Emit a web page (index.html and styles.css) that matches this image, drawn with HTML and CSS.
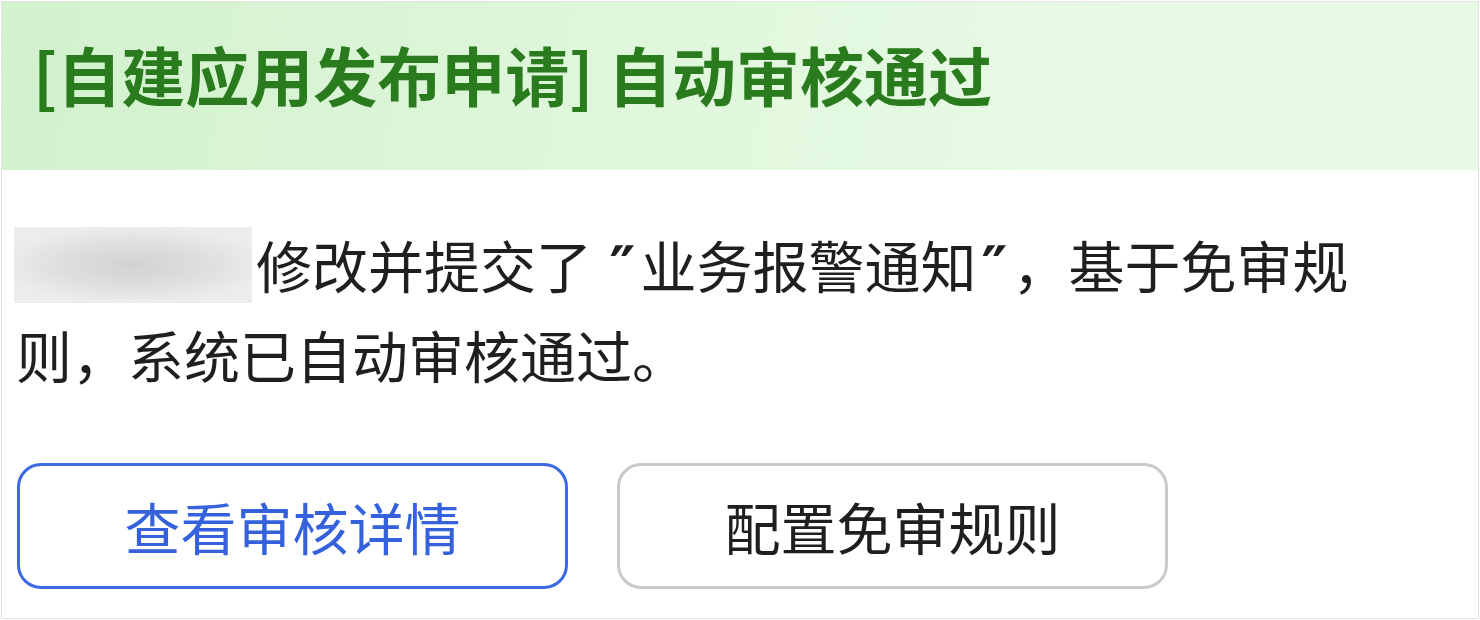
FILE: index.html
```html
<!DOCTYPE html>
<html lang="zh-CN">
<head>
<meta charset="utf-8">
<title>自动审核通过</title>
<link rel="stylesheet" href="styles.css">
</head>
<body>
<div class="card">
  <div class="card-header">
    <div class="card-title">[自建应用发布申请] 自动审核通过</div>
  </div>
  <div class="card-body">
    <p class="message"><span class="blurred-name"></span>修改并提交了 <span class="quote">″</span>业务报警通知<span class="quote">″</span>，基于免审规则，系统已自动审核通过。</p>
    <div class="actions">
      <button class="btn btn-primary">查看审核详情</button>
      <button class="btn btn-default">配置免审规则</button>
    </div>
  </div>
</div>
</body>
</html>
```
FILE: styles.css
```css
html, body {
  margin: 0;
  padding: 0;
  background: #ffffff;
}
body {
  font-family: "Noto Sans CJK SC", "Noto Sans", sans-serif;
}
.card {
  box-sizing: border-box;
  width: 1478px;
  height: 618px;
  margin: 1px 0 0 1px;
  border: 1px solid #e2e2e2;
  background: #ffffff;
  overflow: hidden;
}
.card-header {
  height: 168px;
  box-sizing: border-box;
  padding: 31px 0 0 31px;
  background: linear-gradient(100deg, #d2f1cd 0%, #e0f7dc 45%, #e8fae6 75%, #e8fae6 100%);
}
.card-title {
  font-size: 64px;
  line-height: 80px;
  font-weight: 700;
  color: #2a7a1e;
  white-space: nowrap;
}
.card-body {
  padding: 49px 0 0 14px;
}
.message {
  margin: 0;
  width: 1360px;
  font-size: 56px;
  line-height: 90px;
  color: #1f1f22;
}
.quote {
  font-family: "DejaVu Sans", sans-serif;
  font-size: 58px;
  font-weight: 700;
  line-height: 0;
  padding: 0 5px;
}
.blurred-name {
  display: inline-block;
  vertical-align: top;
  width: 238px;
  height: 76px;
  margin: 8px 4px 0 -2px;
  background: radial-gradient(ellipse 55% 50% at 50% 50%, #d2d2d2 0%, #dedede 55%, #ececec 100%);
  filter: blur(0.5px);
}
.actions {
  display: flex;
  gap: 49px;
  margin-top: 64px;
  padding-left: 1px;
}
.btn {
  box-sizing: border-box;
  width: 551px;
  height: 126px;
  border-radius: 24px;
  background: #ffffff;
  font-family: "Noto Sans CJK SC", "Noto Sans", sans-serif;
  font-size: 56px;
  line-height: 1;
  padding: 0;
  cursor: pointer;
}
.btn-primary {
  border: 3px solid #3d69e4;
  color: #3562dc;
}
.btn-default {
  border: 3px solid #cacacd;
  color: #1f1f22;
}
```
